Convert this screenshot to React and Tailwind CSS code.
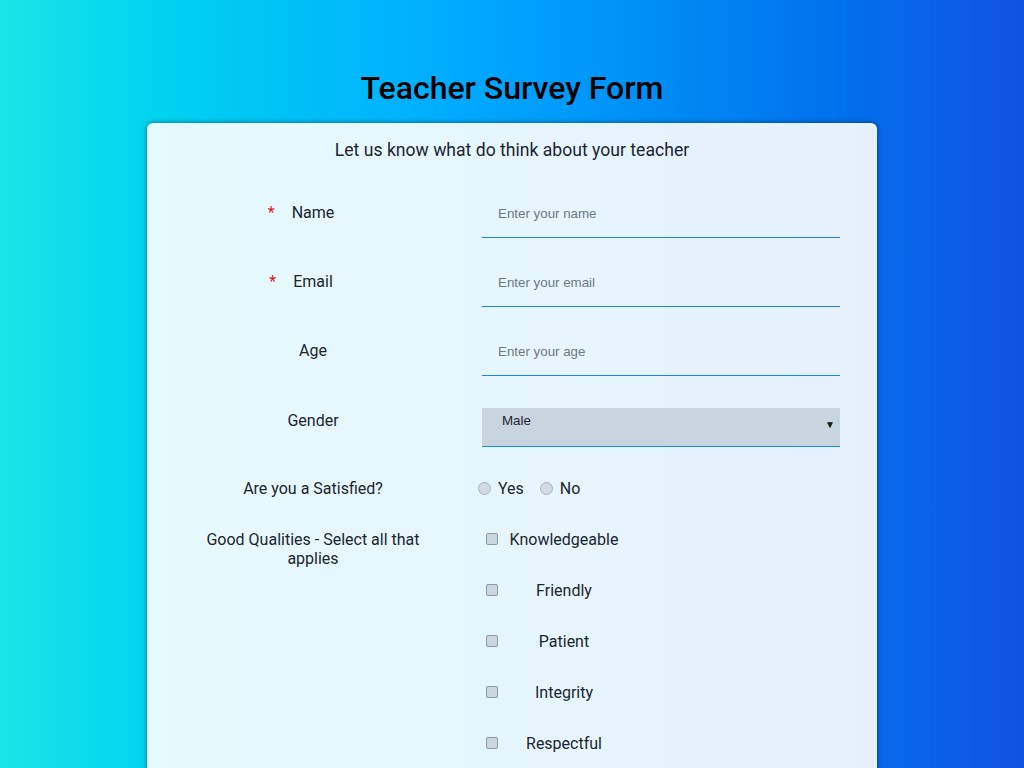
import React from "react";

const font = { fontFamily: "Roboto, 'Liberation Sans', sans-serif" };

function Label({ children, required }) {
  return (
    <div className="w-[232px] ml-[50px] mr-[53px] text-center text-[16px] leading-[19px] text-[#1c2530]">
      <span className="relative">
        {required && (
          <span className="absolute left-[-24px] top-0 text-[#e8161b]">*</span>
        )}
        {children}
      </span>
    </div>
  );
}

function TextInput({ placeholder }) {
  return (
    <input
      type="text"
      placeholder={placeholder}
      className="w-[358px] h-[42px] pl-4 pt-[9px] pb-[16px] leading-4 text-[13.33px] bg-transparent border-b border-[#1787f5] outline-none placeholder:text-[#6c7a84] text-[#1c2530]"
      style={{ fontFamily: "'Liberation Sans', Arial, sans-serif" }}
    />
  );
}

function Radio() {
  return (
    <span className="inline-block w-[13px] h-[13px] rounded-full border border-[#a6b1b9] bg-[#d4dce2]" />
  );
}

function Checkbox() {
  return (
    <span className="inline-block w-[12px] h-[12px] rounded-[2px] border border-[#8f9ba4] bg-[#cbd6de]" />
  );
}

export default function App() {
  const qualities = ["Knowledgeable", "Friendly", "Patient", "Integrity", "Respectful"];
  return (
    <div
      className="min-h-screen w-full bg-linear-to-r from-[#17e6e6] via-[#00aaff] via-45% to-[#1251e2] pt-[69px]"
      style={font}
    >
      <h1 className="text-center text-[32px] leading-[38px] font-medium text-black">
        Teacher Survey Form
      </h1>
      <div className="mx-auto mt-4 w-[730px] rounded-md bg-white/90 shadow-[0_0_5px_rgba(0,0,0,0.5)] pt-[15px] pb-10">
        <p className="text-center text-[17.6px] leading-6 text-[#1c2530]">
          Let us know what do think about your teacher
        </p>

        <div className="mt-[34px] flex flex-col">
          <div className="flex items-start">
            <div className="pt-[7px]">
              <Label required>Name</Label>
            </div>
            <TextInput placeholder="Enter your name" />
          </div>

          <div className="mt-[27px] flex items-start">
            <div className="pt-[7px]">
              <Label required>Email</Label>
            </div>
            <TextInput placeholder="Enter your email" />
          </div>

          <div className="mt-[27px] flex items-start">
            <div className="pt-[7px]">
              <Label>Age</Label>
            </div>
            <TextInput placeholder="Enter your age" />
          </div>

          <div className="mt-[32px] flex items-start">
            <div className="pt-[3px]">
              <Label>Gender</Label>
            </div>
            <div
              className="relative w-[358px] h-[39px] bg-[#c8d5df] border-b border-[#1787f5] pl-5 pt-[5px] text-[13.33px] leading-4 text-[#1c2530]"
              style={{ fontFamily: "'Liberation Sans', Arial, sans-serif" }}
            >
              Male
              <span className="absolute right-[5px] top-[11px] text-[10px] leading-3 text-[#111]">▼</span>
            </div>
          </div>

          <div className="mt-[32px] flex items-center">
            <Label>Are you a Satisfied?</Label>
            <div className="ml-[-4px] flex items-center text-[16px] leading-[19px] text-[#1c2530]">
              <Radio />
              <span className="ml-[7px]">Yes</span>
              <span className="ml-[16px] flex items-center">
                <Radio />
              </span>
              <span className="ml-[7px]">No</span>
            </div>
          </div>

          <div className="mt-[32px] flex items-start">
            <Label>Good Qualities - Select all that applies</Label>
            <div className="flex flex-col gap-[32px]">
              {qualities.map((q) => (
                <div key={q} className="flex items-center ml-[4px]">
                  <span className="flex -mt-[1px]">
                    <Checkbox />
                  </span>
                  <span className="ml-[6px] w-[120px] text-center text-[16px] leading-[19px] text-[#1c2530]">
                    {q}
                  </span>
                </div>
              ))}
            </div>
          </div>
        </div>
      </div>
    </div>
  );
}
